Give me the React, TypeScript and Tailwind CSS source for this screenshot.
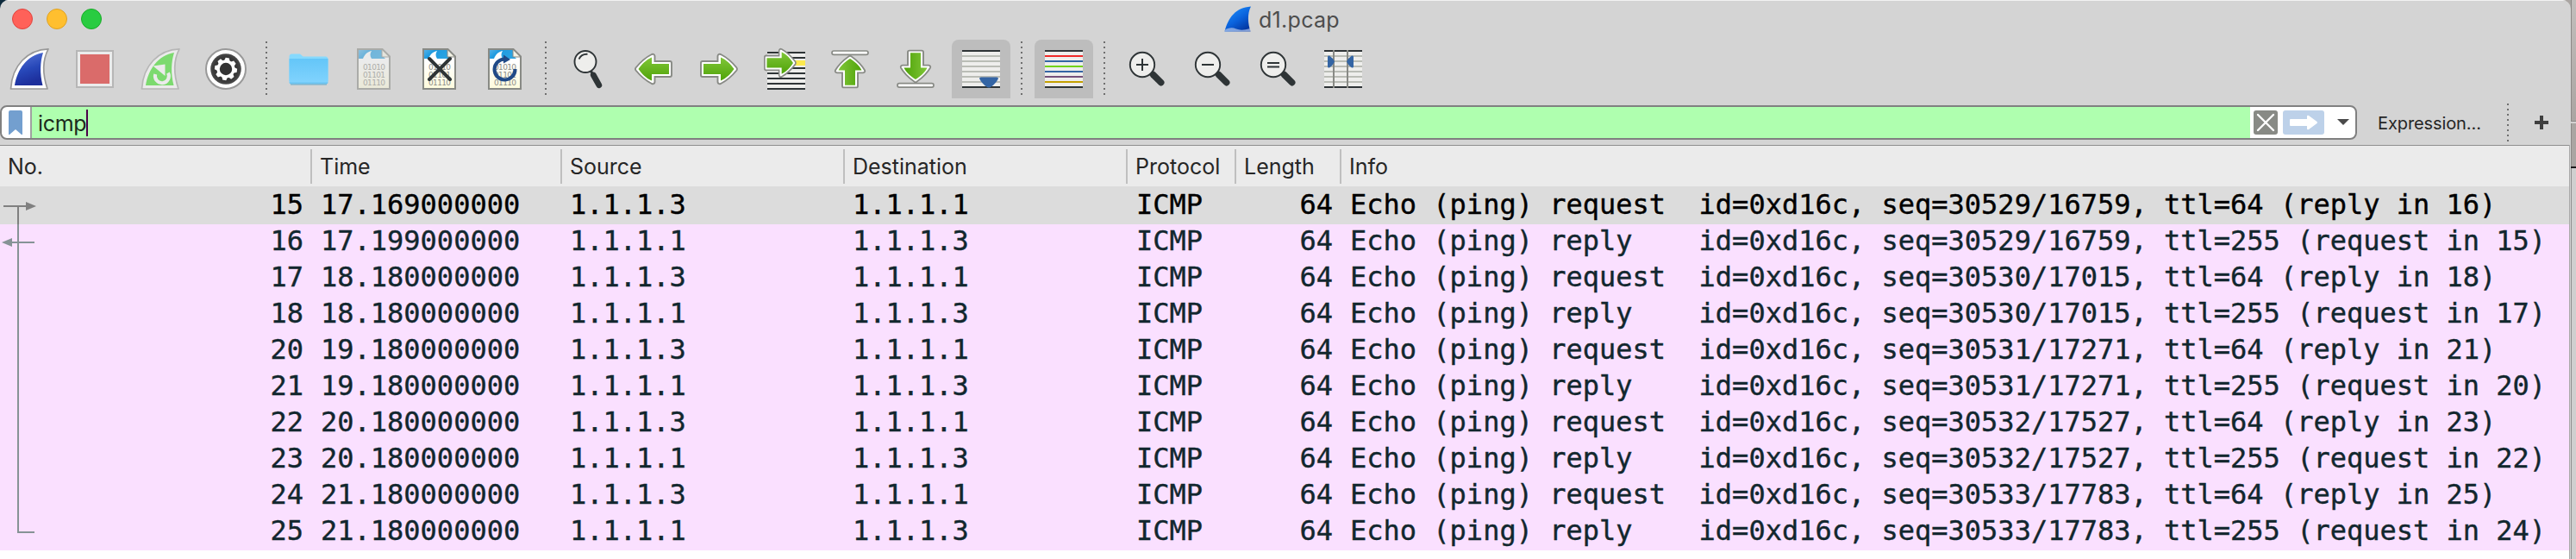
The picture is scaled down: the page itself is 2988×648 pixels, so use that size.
import React from "react";

type Packet = { no: number; time: string; src: string; dst: string; info: string };

const packets: Packet[] = [
  { no: 15, time: "17.169000000", src: "1.1.1.3", dst: "1.1.1.1", info: "Echo (ping) request  id=0xd16c, seq=30529/16759, ttl=64 (reply in 16)" },
  { no: 16, time: "17.199000000", src: "1.1.1.1", dst: "1.1.1.3", info: "Echo (ping) reply    id=0xd16c, seq=30529/16759, ttl=255 (request in 15)" },
  { no: 17, time: "18.180000000", src: "1.1.1.3", dst: "1.1.1.1", info: "Echo (ping) request  id=0xd16c, seq=30530/17015, ttl=64 (reply in 18)" },
  { no: 18, time: "18.180000000", src: "1.1.1.1", dst: "1.1.1.3", info: "Echo (ping) reply    id=0xd16c, seq=30530/17015, ttl=255 (request in 17)" },
  { no: 20, time: "19.180000000", src: "1.1.1.3", dst: "1.1.1.1", info: "Echo (ping) request  id=0xd16c, seq=30531/17271, ttl=64 (reply in 21)" },
  { no: 21, time: "19.180000000", src: "1.1.1.1", dst: "1.1.1.3", info: "Echo (ping) reply    id=0xd16c, seq=30531/17271, ttl=255 (request in 20)" },
  { no: 22, time: "20.180000000", src: "1.1.1.3", dst: "1.1.1.1", info: "Echo (ping) request  id=0xd16c, seq=30532/17527, ttl=64 (reply in 23)" },
  { no: 23, time: "20.180000000", src: "1.1.1.1", dst: "1.1.1.3", info: "Echo (ping) reply    id=0xd16c, seq=30532/17527, ttl=255 (request in 22)" },
  { no: 24, time: "21.180000000", src: "1.1.1.3", dst: "1.1.1.1", info: "Echo (ping) request  id=0xd16c, seq=30533/17783, ttl=64 (reply in 25)" },
  { no: 25, time: "21.180000000", src: "1.1.1.1", dst: "1.1.1.3", info: "Echo (ping) reply    id=0xd16c, seq=30533/17783, ttl=255 (request in 24)" },
];

const columns = "grid grid-cols-[362px_290px_328px_328px_126px_122px_1fr]";

/* Toolbar icons share a 48px box, drawn on a 48 unit grid. */
function Icon({ children }: { children: React.ReactNode }) {
  return (
    <svg className="block size-12 shrink-0 overflow-visible" viewBox="0 0 48 48" fill="none">
      {children}
    </svg>
  );
}

function Tool({ children, active }: { children: React.ReactNode; active?: boolean }) {
  return (
    <div
      className={
        active
          ? "flex h-[68px] w-[68px] items-center justify-center rounded-t-lg bg-[#bdbdbd]"
          : "flex h-[68px] w-[68px] items-center justify-center"
      }
    >
      {children}
    </div>
  );
}

function Separator({ className = "" }: { className?: string }) {
  return (
    <svg className={"block h-[62px] w-[2px] shrink-0 " + className} viewBox="0 0 2 62">
      <path d="M1 0V62" stroke="#6f6f6f" strokeWidth="2" strokeDasharray="2 4" />
    </svg>
  );
}

function Fin() {
  return (
    <Icon>
      <path d="M2.500 47L45 47C40 32 38 16 46 .8C22 1.500 4 20 2.500 47Z" fill="#fff" stroke="#999" strokeWidth="1.700" strokeLinejoin="round" />
      <path d="M7 43H39.500C36 29 36.500 16 40 5C22 8 10 24 7 43Z" fill="url(#finBlue)" />
    </Icon>
  );
}

function RestartFin() {
  return (
    <Icon>
      <path d="M2.500 47L45 47C40 32 38 16 46 .8C22 1.500 4 20 2.500 47Z" fill="#ebebeb" stroke="#b6b6b6" strokeWidth="1.700" strokeLinejoin="round" />
      <path d="M7 43H39.500C36 29 36.500 16 40 5C22 8 10 24 7 43Z" fill="#7cda6f" />
      <path d="M18.200 30A8 8 0 1 0 33 28.500" stroke="#ebebeb" strokeWidth="4" />
      <path d="M15.500 20.500L29.500 18.500V32Z" fill="#ebebeb" />
    </Icon>
  );
}

const teeth = [0, 45, 90, 135, 180, 225, 270, 315];

function Gear() {
  return (
    <Icon>
      <circle cx="24" cy="24" r="23" fill="#fff" stroke="#999" strokeWidth="2" />
      <circle cx="24" cy="24" r="17.800" fill="url(#gearDark)" />
      {teeth.map((a) => (
        <path key={a} d="M20.800 14.500L21.900 11H26.100L27.200 14.500Z" fill="#fff" transform={`rotate(${a + 8} 24 24)`} />
      ))}
      <circle cx="24" cy="24" r="8.900" stroke="#fff" strokeWidth="3.400" />
    </Icon>
  );
}

function Doc({ dim, children }: { dim?: boolean; children?: React.ReactNode }) {
  return (
    <Icon>
      <g transform="translate(-1 0)">
        <g opacity={dim ? 0.55 : 1}>
          <path d="M6 1H35L43 9V47H6Z" fill="url(#paper)" />
          <path d="M6 1H35V9L38 12H6Z" fill="url(#sky)" />
          <path d="M12 12C14 7 17 4 22 3C20 6 20 9 22 12Z" fill="#fff" />
          <path d="M34 1V10H43Z" fill="#f4f3e6" stroke="#888a85" strokeWidth="1" />
          <path d="M6 1H34.500L43 9.500V47H6Z" stroke="#888a85" strokeWidth="2" />
          <g fill="#8d8d88" fontSize="9" fontFamily="'DejaVu Sans', sans-serif">
            <text x="12" y="24.500" textLength="26">01010</text>
            <text x="12" y="33.500" textLength="26">01101</text>
            <text x="12" y="42.500" textLength="26">01110</text>
          </g>
        </g>
        {children}
      </g>
    </Icon>
  );
}

/* Right-pointing arrow centred on 24,24; other directions rotate it. */
function Arrow({ transform }: { transform?: string }) {
  return (
    <g transform={transform}>
      <path
        d="M5 15H22.500V9Q23 6 26 7C34 11 40 17 44.500 22.500Q45.500 24 44.500 25.500C40 31 34 37 26 41Q23 42 22.500 39V33H5Q3 33 3 31V17Q3 15 5 15Z"
        fill="#fff"
        stroke="#888a85"
        strokeWidth="1.900"
      />
      <path d="M6 18H26V10.500C33 13.500 37.500 18.500 41.500 24C37.500 29.500 33 34.500 26 37.500V30H6Z" fill="url(#leaf)" />
    </g>
  );
}

function Page({ colors }: { colors: string[] }) {
  return (
    <>
      <rect x="2" y="2" width="44" height="44" fill="#eeeeec" />
      {colors.map((c, i) => (
        <rect key={i} x="2" y={2 + i * 6} width="44" height="2" fill={c} />
      ))}
    </>
  );
}

const grayLines = ["#2e3436", "#babdb6", "#babdb6", "#babdb6", "#babdb6", "#babdb6", "#babdb6", "#2e3436"];

function Zoom({ children }: { children: React.ReactNode }) {
  return (
    <Icon>
      <path d="M31.500 30.500L40.700 39.700" stroke="#2e3436" strokeWidth="7.500" strokeLinecap="round" />
      <circle cx="19" cy="19" r="14.200" fill="#eeeeec" stroke="#2e3436" strokeWidth="1.900" />
      <g stroke="#2e3436" strokeWidth="2">{children}</g>
    </Icon>
  );
}

function Defs() {
  return (
    <svg className="absolute size-0">
      <defs>
        <linearGradient id="finBlue" x1="0" y1="0" x2="0.300" y2="1">
          <stop offset="0" stopColor="#5a78da" />
          <stop offset="0.600" stopColor="#2747b8" />
          <stop offset="1" stopColor="#1d2f9c" />
        </linearGradient>
        <radialGradient id="gearDark">
          <stop offset="0.500" stopColor="#333" />
          <stop offset="0.800" stopColor="#3a3a3a" />
          <stop offset="1" stopColor="#4c4c4c" />
        </radialGradient>
        <linearGradient id="paper" x1="0" y1="0" x2="0" y2="1">
          <stop offset="0.300" stopColor="#ffffff" />
          <stop offset="1" stopColor="#fdfbdc" />
        </linearGradient>
        <linearGradient id="sky" x1="0" y1="0" x2="1" y2="0.400">
          <stop offset="0" stopColor="#5db5e8" />
          <stop offset="0.400" stopColor="#1f9be0" />
          <stop offset="1" stopColor="#2aa3e2" />
        </linearGradient>
        <linearGradient id="leaf" x1="0" y1="0" x2="0" y2="1">
          <stop offset="0" stopColor="#80c638" />
          <stop offset="1" stopColor="#4fa308" />
        </linearGradient>
        <linearGradient id="folder" x1="0" y1="0" x2="0" y2="1">
          <stop offset="0" stopColor="#64c6f8" />
          <stop offset="0.900" stopColor="#7fd2fd" />
          <stop offset="1" stopColor="#5fbdec" />
        </linearGradient>
        <linearGradient id="appFin" x1="0.200" y1="0" x2="0.900" y2="1">
          <stop offset="0" stopColor="#1f90fb" />
          <stop offset="0.500" stopColor="#0a62dc" />
          <stop offset="1" stopColor="#022c92" />
        </linearGradient>
      </defs>
    </svg>
  );
}

function Toolbar() {
  return (
    <div className="flex h-[76px] items-start">
      <div className="flex gap-2">
        <Tool><Fin /></Tool>
        <Tool>
          <Icon>
            <rect x="3" y="3" width="42" height="42" fill="#ebebeb" stroke="#b6b6b6" strokeWidth="2" />
            <rect x="7" y="7" width="34" height="34" fill="#da6b6a" />
          </Icon>
        </Tool>
        <Tool><RestartFin /></Tool>
        <Tool><Gear /></Tool>
      </div>
      <Separator className="mt-[2px] ml-3" />
      <div className="ml-3.5 flex gap-2">
        <Tool>
          <Icon>
            <path d="M1.500 10Q1.500 6.500 4.500 6.500H14L17.500 9.500H43.500Q46.500 9.500 46.500 13V38H1.500Z" fill="#86d9fd" />
            <path d="M1.500 12H46.500V39.500Q46.500 41.500 44.500 41.500H3.500Q1.500 41.500 1.500 39.500Z" fill="url(#folder)" />
            <path d="M3 42H45" stroke="#68abc9" strokeWidth="1" />
          </Icon>
        </Tool>
        <Tool><Doc dim /></Tool>
        <Tool>
          <Doc><path d="M13 12L37 36M37 12L13 36" stroke="#2e3436" strokeWidth="4" strokeLinecap="round" /></Doc>
        </Tool>
        <Tool>
          <Doc>
            <path d="M25 12.500A12 12 0 1 0 36.500 24" stroke="#204a87" strokeWidth="4" />
            <path d="M23 7.500L31 13L23 17.500Z" fill="#204a87" />
          </Doc>
        </Tool>
      </div>
      <Separator className="mt-[2px] ml-3" />
      <div className="ml-3.5 flex gap-2">
        <Tool>
          <Icon>
            <path d="M30.300 31L36.800 42.700" stroke="#2e3436" strokeWidth="6.800" strokeLinecap="round" />
            <path d="M27 25.500L30 31" stroke="#2e3436" strokeWidth="3" />
            <circle cx="21" cy="15.500" r="12.500" fill="#eeeeec" stroke="#2e3436" strokeWidth="1.900" />
            <path d="M13.500 12.500Q16.500 6.300 23.500 6.800" stroke="#2e3436" strokeWidth="1.800" />
          </Icon>
        </Tool>
        <Tool><Icon><Arrow transform="matrix(-1 0 0 1 48 0)" /></Icon></Tool>
        <Tool><Icon><Arrow /></Icon></Tool>
        <Tool>
          <Icon>
            <rect x="4" y="4" width="44" height="44" fill="#eeeeec" />
            <rect x="4" y="14" width="44" height="6" fill="#fce94f" />
            {[0, 1, 3, 4, 5, 6, 7].map((i) => (
              <rect key={i} x="4" y={4 + i * 6} width="44" height="2" fill="#2e3436" />
            ))}
            <Arrow transform="translate(-1.700 -5.600) scale(.86 .94)" />
          </Icon>
        </Tool>
        <Tool>
          <Icon>
            <rect x="3" y="3" width="42" height="4.400" rx="2.200" fill="#fff" stroke="#888a85" strokeWidth="1.700" />
            <Arrow transform="translate(0 3) rotate(-90 24 24) translate(3 0) scale(.87 1)" />
          </Icon>
        </Tool>
        <Tool>
          <Icon>
            <Arrow transform="translate(0 -3) rotate(90 24 24) translate(3 0) scale(.87 1)" />
            <rect x="3" y="40.700" width="42" height="4.400" rx="2.200" fill="#fff" stroke="#888a85" strokeWidth="1.700" />
          </Icon>
        </Tool>
        <Tool active>
          <Icon>
            <Page colors={grayLines} />
            <path d="M22 35Q22 33.500 24 33.500H42Q44 33.500 44 35C42 39 39 42.500 35 45Q33 46 31 45C27 42.500 24 39 22 35Z" fill="#3465a4" />
          </Icon>
        </Tool>
      </div>
      <Separator className="mt-[2px] ml-3" />
      <div className="ml-3.5">
        <Tool active>
          <Icon><Page colors={["#2e3436", "#ef2929", "#3465a4", "#73d216", "#3465a4", "#75507b", "#c4a000", "#2e3436"]} /></Icon>
        </Tool>
      </div>
      <Separator className="mt-[2px] ml-3" />
      <div className="ml-3.5 flex gap-2">
        <Tool><Zoom><path d="M12 19H26M19 12V26" /></Zoom></Tool>
        <Tool><Zoom><path d="M12 19H26" /></Zoom></Tool>
        <Tool><Zoom><path d="M12 17H26M12 21.500H26" /></Zoom></Tool>
        <Tool>
          <Icon>
            <Page colors={grayLines} />
            <path d="M13 2V46M29 2V46" stroke="#888a85" strokeWidth="2" />
            <path d="M6 10Q6 8 8 8.500Q12 11 14 15.500Q12 20 8 22.500Q6 23 6 21ZM36 10Q36 8 34 8.500Q30 11 28 15.500Q30 20 34 22.500Q36 23 36 21Z" fill="#3465a4" />
          </Icon>
        </Tool>
      </div>
    </div>
  );
}

function FilterBar() {
  return (
    <div className="flex h-[46px] items-start">
      <div className="flex h-10 w-[2734px] shrink-0 overflow-hidden rounded-lg border-2 border-[#808080] bg-white">
        <div className="flex w-[35px] shrink-0 justify-start border-r-2 border-[#a0a0a0] pt-1 pl-2">
          <svg className="block h-7 w-4" viewBox="0 0 16 28">
            <path d="M0 2Q0 0 2 0H14Q16 0 16 2V28H15L8 22L1 28H0Z" fill="#739fcf" />
          </svg>
        </div>
        <div className="flex grow items-center bg-[#afffaf] pl-[7px]">
          <span className="pt-px font-['Inter','Liberation_Sans',sans-serif] text-[25px] leading-9 tracking-[-0.3px] text-[#1c2a1c]">icmp</span>
          <span className="h-[31px] w-[2px] bg-[#4b0049]" />
        </div>
        <div className="flex w-[122px] shrink-0 items-start pt-1 pl-1">
          <svg className="block h-7 w-7" viewBox="0 0 28 28">
            <rect width="28" height="28" rx="3" fill="#888a85" />
            <path d="M5 5L23 23M23 5L5 23" stroke="#fff" strokeWidth="2.400" strokeLinecap="round" />
          </svg>
          <svg className="ml-1.5 block h-7 w-12" viewBox="0 0 48 28">
            <rect width="48" height="28" rx="3" fill="#bdd1e9" />
            <path d="M9 10H28V7Q28 5 30 6L39.500 13Q40.500 14 39.500 15L30 22Q28 23 28 21V18H9Q8 18 8 17V11Q8 10 9 10Z" fill="#fff" />
          </svg>
          <svg className="mt-2.5 ml-[15px] block h-[7px] w-3.5" viewBox="0 0 14 7">
            <path d="M0 0H14L7 7Z" fill="#4a4a4a" />
          </svg>
        </div>
      </div>
      <span className="ml-6 w-[121px] pt-px font-['Inter','Liberation_Sans',sans-serif] text-[20px] leading-10 tracking-[-0.1px] whitespace-nowrap text-[#262626]">Expression...</span>
      <svg className="-mt-0.5 ml-[29px] block h-11 w-[2px]" viewBox="0 0 2 44">
        <path d="M1 0V44" stroke="#6f6f6f" strokeWidth="2" strokeDasharray="2 4" />
      </svg>
      <svg className="mt-3 ml-[30px] block size-4" viewBox="0 0 16 16">
        <path d="M0 8H16M8 0V16" stroke="#3f3f3f" strokeWidth="4" />
      </svg>
    </div>
  );
}

function TitleBar() {
  return (
    <div className="flex h-11 items-start border-t border-[#f2f2f2]">
      <div className="flex w-[1420px] gap-4 pt-[9px] pl-3.5">
        <span className="size-6 rounded-full border border-[#e0443e] bg-[#ff6159]" />
        <span className="size-6 rounded-full border border-[#dea123] bg-[#ffbf2f]" />
        <span className="size-6 rounded-full border border-[#1aab29] bg-[#29cc41]" />
      </div>
      <svg className="mt-1.5 block h-[31px] w-8" viewBox="0 0 32 31">
        <path d="M.5 29.500C5 13 13 2 31 .5C26.500 9 27.500 20 30.500 29.500Z" fill="url(#appFin)" />
        <path d="M1.500 27Q8 24 14 26.500T30 26L30.500 29.500H.5Z" fill="#a9c0ea" opacity=".75" />
      </svg>
      <span className="ml-2 font-['Inter','Liberation_Sans',sans-serif] text-[25px] leading-[45px] tracking-[0.3px] text-[#4d4d4d]">d1.pcap</span>
    </div>
  );
}

function ColumnHeader() {
  const names = ["No.", "Time", "Source", "Destination", "Protocol", "Length", "Info"];
  return (
    <div className={columns + " h-[50px] border-t border-b-2 border-t-[#8f8f8f] border-b-[#dcdcdc] bg-[#ebebeb] pt-1"}>
      {names.map((name, i) => (
        <div
          key={name}
          className={
            "flex h-10 items-center pt-0.5 pl-[9px] font-['Inter','Liberation_Sans',sans-serif] text-[25px] text-[#262626] " +
            (i === names.length - 1 ? "" : "border-r-2 border-[#bfbfbf]")
          }
        >
          {name}
        </div>
      ))}
    </div>
  );
}

function PacketTable() {
  return (
    <div className="relative">
      {packets.map((p, i) => (
        <div
          key={p.no}
          className={
            columns +
            " h-[42px] font-['DejaVu_Sans_Mono',monospace] text-[32px] leading-[38px] whitespace-pre [-webkit-text-stroke:0.4px] " +
            (i === 0 ? "bg-[#dcdcdc] text-black" : "bg-[#fae0ff] text-[#12272e]")
          }
        >
          <div className="pr-2.5 text-right">{p.no}</div>
          <div className="pl-2.5">{p.time}</div>
          <div className="pl-[9px]">{p.src}</div>
          <div className="pl-[9px]">{p.dst}</div>
          <div className="pl-2.5">ICMP</div>
          <div className="pr-2.5 text-right">64</div>
          <div className="pl-2.5">{p.info}</div>
        </div>
      ))}
      <svg className="absolute top-0 left-0 block h-[420px] w-11" viewBox="0 0 44 420">
        <path d="M4 21H31M21 22V42" stroke="#808080" strokeWidth="2" fill="none" />
        <path d="M30 16L42 21L30 26Z" fill="#808080" />
        <path d="M21 42V399H40M13 63H40" stroke="#869396" strokeWidth="2" fill="none" />
        <path d="M14 58L2 63L14 68Z" fill="#869396" />
      </svg>
    </div>
  );
}

export default function App() {
  return (
    <div className="flex h-[648px] w-[2988px] overflow-hidden bg-linear-to-r from-[#0e2a3c] from-50% to-[#aaa5a2] to-50%">
      <Defs />
      <div className="flex w-[2982px] shrink-0 flex-col overflow-hidden rounded-t-[10px] bg-[#d4d4d4]">
        <TitleBar />
        <div className="h-[2px]" />
        <Toolbar />
        <FilterBar />
        <div className="mr-px flex grow flex-col border-r border-[#a8a8a8] bg-white">
          <ColumnHeader />
          <PacketTable />
        </div>
      </div>
      <div className="flex grow flex-col">
        <div className="h-[140px] border-l border-[#8c8886] bg-linear-to-b from-[#c2bebc] to-[#aaa5a2]" />
        <div className="h-[3px] border-t border-[#8c8886] bg-[#d4d2d1]" />
        <div className="h-[50px] border-l border-[#8c8886] bg-[#aaa5a2]" />
        <div className="h-[2px] bg-[#1c1a1a]" />
        <div className="grow border-l border-[#8f8f8f] bg-[#cfcfcf]" />
      </div>
    </div>
  );
}
